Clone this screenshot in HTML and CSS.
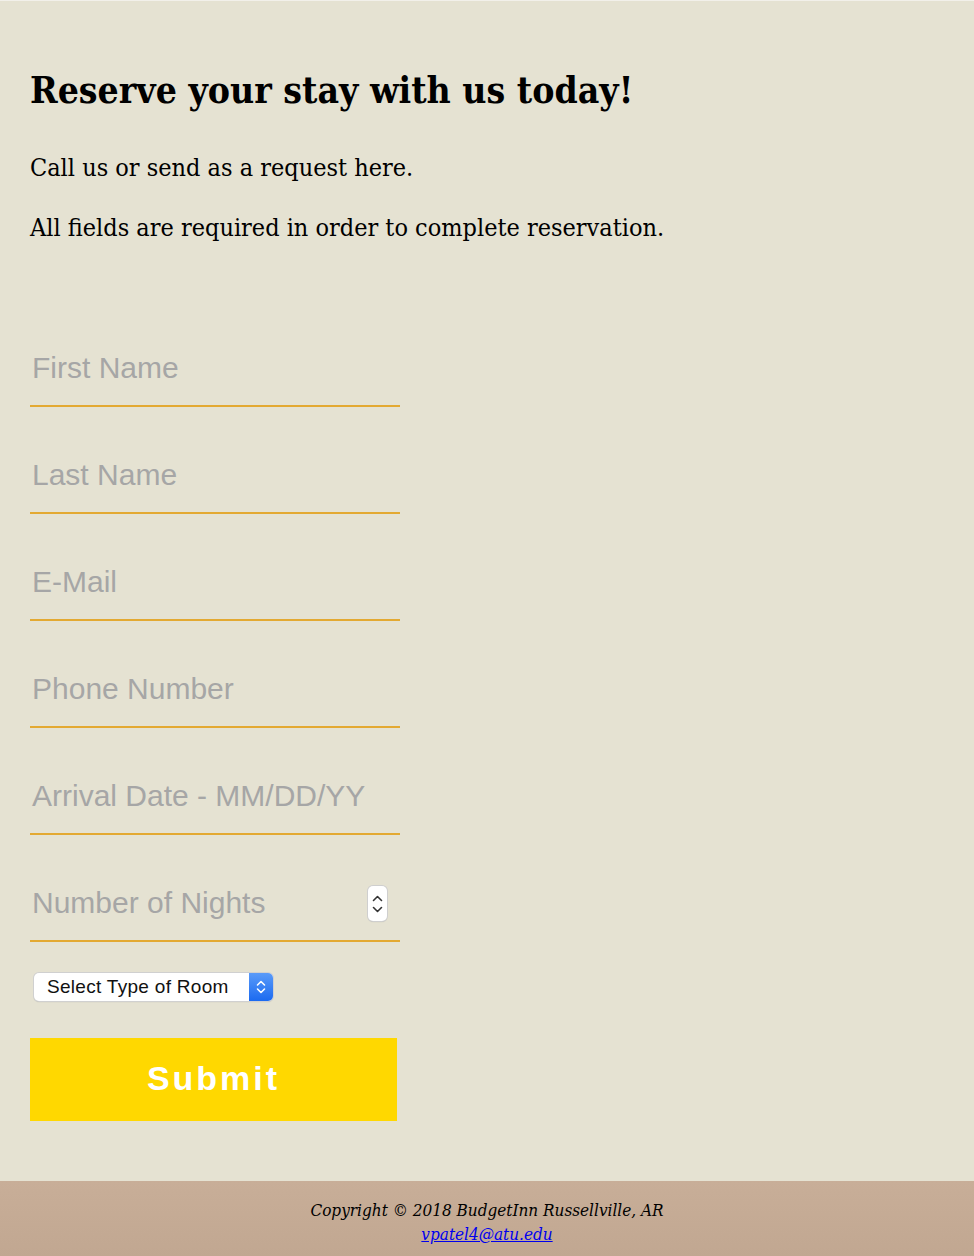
FILE: index.html
```html
<!DOCTYPE html>
<html>
<head>
<meta charset="utf-8">
<link rel="stylesheet" href="styles.css">
</head>
<body>
<main class="page">
  <section class="intro">
    <h1 class="title">Reserve your stay with us today!</h1>
    <p class="text">Call us or send as a request here.</p>
    <p class="text">All fields are required in order to complete reservation.</p>
  </section>
  <form class="form">
    <div class="field"><span class="ph">First Name</span></div>
    <div class="field"><span class="ph">Last Name</span></div>
    <div class="field"><span class="ph">E-Mail</span></div>
    <div class="field"><span class="ph">Phone Number</span></div>
    <div class="field"><span class="ph">Arrival Date - MM/DD/YY</span></div>
    <div class="field field-num"><span class="ph">Number of Nights</span>
      <span class="spin"><svg width="19" height="35" viewBox="0 0 19 35"><path d="M5.5 14.5 L9.5 10.5 L13.5 14.5" fill="none" stroke="#333" stroke-width="1.6" stroke-linecap="round" stroke-linejoin="round"/><path d="M5.5 21.5 L9.5 25.5 L13.5 21.5" fill="none" stroke="#333" stroke-width="1.6" stroke-linecap="round" stroke-linejoin="round"/></svg></span>
    </div>
    <div class="select">
      <span class="select-label">Select Type of Room</span>
      <span class="select-btn"><svg width="12" height="24" viewBox="0 0 12 24"><path d="M2.5 10 L6 6.5 L9.5 10" fill="none" stroke="#fff" stroke-width="1.6" stroke-linecap="round" stroke-linejoin="round"/><path d="M2.5 14 L6 17.5 L9.5 14" fill="none" stroke="#fff" stroke-width="1.6" stroke-linecap="round" stroke-linejoin="round"/></svg></span>
    </div>
    <div class="submit">Submit</div>
  </form>
</main>
<footer class="footer">
  <p class="copy">Copyright © 2018 BudgetInn Russellville, AR</p>
  <a class="mail" href="#">vpatel4@atu.edu</a>
</footer>
</body>
</html>
```
FILE: styles.css
```css
html, body {
  margin: 0;
  padding: 0;
}
body {
  background: #e5e2d2;
  font-family: "DejaVu Serif Condensed", "DejaVu Serif", serif;
  font-stretch: condensed;
  color: #000;
  border-top: 1px solid #f2f0ea;
}
.page {
  padding: 0 30px;
  height: 1180px;
  box-sizing: border-box;
}
.intro {
  padding-top: 66px;
}
.title {
  margin: 0;
  font-size: 37px;
  font-weight: bold;
  line-height: 46px;
}
.text {
  margin: 0;
  font-size: 25px;
  line-height: 30px;
}
.intro .title + .text {
  margin-top: 40px;
}
.text + .text {
  margin-top: 30px;
}
.form {
  margin-top: 57px;
  display: flex;
  flex-direction: column;
  width: 370px;
}
.field {
  height: 107px;
  box-sizing: border-box;
  border-bottom: 2px solid #e3a932;
  display: flex;
  align-items: center;
  justify-content: space-between;
  padding: 51px 13px 20px 2px;
}
.ph {
  font-family: "Liberation Sans", sans-serif;
  font-size: 30px;
  line-height: 34px;
  color: #a6a6a6;
}
.spin {
  width: 19px;
  height: 35px;
  background: #fff;
  border-radius: 5px;
  box-shadow: 0 0 0 1px #cfcfcf, 0 1px 1px rgba(0,0,0,0.2);
  display: flex;
}
.select {
  margin: 31px 0 0 4px;
  width: 239px;
  height: 28px;
  background: #fff;
  border-radius: 5px;
  box-shadow: 0 0 0 1px #d0d0d0, 0 1px 1px rgba(0,0,0,0.25);
  display: flex;
  justify-content: space-between;
  overflow: hidden;
}
.select-label {
  font-family: "Liberation Sans", sans-serif;
  font-size: 19px;
  line-height: 28px;
  padding-left: 13px;
  letter-spacing: 0.3px;
  color: #111;
}
.select-btn {
  width: 24px;
  background: linear-gradient(#5a9bf9, #1b6af0);
  display: flex;
  align-items: center;
  justify-content: center;
}
.submit {
  margin-top: 37px;
  width: 367px;
  height: 83px;
  background: #ffd800;
  color: #fff;
  font-family: "Liberation Sans", sans-serif;
  font-weight: bold;
  font-size: 34px;
  letter-spacing: 3px;
  display: flex;
  align-items: center;
  justify-content: center;
  padding-bottom: 3px;
  box-sizing: border-box;
}
.footer {
  height: 76px;
  background: linear-gradient(#c8ae98, #c1a791);
  text-align: center;
  font-style: italic;
  padding-top: 17px;
  box-sizing: border-box;
}
.copy {
  margin: 0;
  font-size: 17px;
  line-height: 24px;
}
.mail {
  font-size: 17px;
  line-height: 24px;
  color: #0000ee;
}
```
